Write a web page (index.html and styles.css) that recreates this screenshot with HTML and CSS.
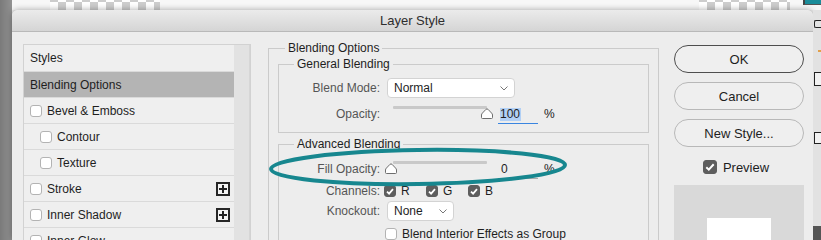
FILE: index.html
```html
<!DOCTYPE html>
<html>
<head>
<meta charset="utf-8">
<title>Layer Style</title>
<link rel="stylesheet" href="styles.css">
</head>
<body>
<div class="desktop">
  <div class="side-left"></div>
  <div class="top-strip">
    <div class="checker checker-a"></div>
    <div class="checker checker-b"></div>
    <div class="teal-tab"></div>
  </div>
  <div class="dialog">
    <div class="titlebar">Layer Style</div>
    <div class="dlg-body">
      <div class="style-panel">
        <ul class="style-list">
          <li class="style-row first">Styles</li>
          <li class="style-row is-selected">Blending Options</li>
          <li class="style-row"><span class="cb"></span>Bevel &amp; Emboss</li>
          <li class="style-row sub"><span class="cb"></span>Contour</li>
          <li class="style-row sub"><span class="cb"></span>Texture</li>
          <li class="style-row"><span class="cb"></span>Stroke<span class="plus"><svg width="10" height="10" viewBox="0 0 10 10"><path d="M5 1v8M1 5h8" stroke="#222" stroke-width="2"/></svg></span></li>
          <li class="style-row"><span class="cb"></span>Inner Shadow<span class="plus"><svg width="10" height="10" viewBox="0 0 10 10"><path d="M5 1v8M1 5h8" stroke="#222" stroke-width="2"/></svg></span></li>
          <li class="style-row"><span class="cb"></span>Inner Glow</li>
        </ul>
        <div class="scroll-track"></div>
      </div>

      <div class="options">
        <fieldset class="group outer">
          <legend class="legend-outer">Blending Options</legend>
          <fieldset class="group inner general">
            <legend class="legend-inner">General Blending</legend>
            <div class="row row-select mt7">
              <span class="lbl">Blend Mode:</span>
              <div class="select select-wide"><span>Normal</span><svg class="chev" width="8" height="5" viewBox="0 0 8 5"><path d="M0.5 0.5L4 4L7.5 0.5" fill="none" stroke="#777" stroke-width="1"/></svg></div>
            </div>
            <div class="row row-slider mt4">
              <span class="lbl">Opacity:</span>
              <div class="slider">
                <div class="track"></div>
                <svg class="thumb" style="left:94px" width="12" height="11" viewBox="0 0 12 11"><path d="M1.5 10.5H10.5Q11.5 10.5 11.5 9.5V7Q11.5 6 10.6 5.1L7 1.3Q6 0.4 5 1.3L1.4 5.1Q0.5 6 0.5 7V9.5Q0.5 10.5 1.5 10.5Z" fill="#fff" stroke="#6e6e6e"/></svg>
              </div>
              <div class="num is-focused"><span class="num-sel">100</span></div>
              <span class="pct">%</span>
            </div>
          </fieldset>

          <fieldset class="group inner advanced">
            <legend class="legend-inner">Advanced Blending</legend>
            <div class="row row-slider mt6">
              <span class="lbl">Fill Opacity:</span>
              <div class="slider">
                <div class="track"></div>
                <svg class="thumb" style="left:-2px" width="12" height="11" viewBox="0 0 12 11"><path d="M1.5 10.5H10.5Q11.5 10.5 11.5 9.5V7Q11.5 6 10.6 5.1L7 1.3Q6 0.4 5 1.3L1.4 5.1Q0.5 6 0.5 7V9.5Q0.5 10.5 1.5 10.5Z" fill="#fff" stroke="#6e6e6e"/></svg>
              </div>
              <div class="num"><span class="num-val">0</span></div>
              <span class="pct">%</span>
            </div>
            <div class="row row-check mt5">
              <span class="lbl">Channels:</span>
              <div class="channels">
                <span class="chan"><span class="cb checked"><svg width="8" height="7" viewBox="0 0 8 7"><path d="M1 3.6L3.1 5.6L7 1.2" fill="none" stroke="#fff" stroke-width="1.8"/></svg></span>R</span>
                <span class="chan"><span class="cb checked"><svg width="8" height="7" viewBox="0 0 8 7"><path d="M1 3.6L3.1 5.6L7 1.2" fill="none" stroke="#fff" stroke-width="1.8"/></svg></span>G</span>
                <span class="chan"><span class="cb checked"><svg width="8" height="7" viewBox="0 0 8 7"><path d="M1 3.6L3.1 5.6L7 1.2" fill="none" stroke="#fff" stroke-width="1.8"/></svg></span>B</span>
              </div>
            </div>
            <div class="row row-select mt3">
              <span class="lbl">Knockout:</span>
              <div class="select select-narrow"><span>None</span><svg class="chev" width="8" height="5" viewBox="0 0 8 5"><path d="M0.5 0.5L4 4L7.5 0.5" fill="none" stroke="#777" stroke-width="1"/></svg></div>
            </div>
            <div class="row row-option mt6">
              <span class="cb"></span><span class="opt-text">Blend Interior Effects as Group</span>
            </div>
          </fieldset>
        </fieldset>
      </div>

      <div class="actions">
        <button class="btn btn-default">OK</button>
        <button class="btn">Cancel</button>
        <button class="btn">New Style...</button>
        <div class="preview-toggle">
          <span class="cb checked big"><svg width="10" height="8" viewBox="0 0 10 8"><path d="M1.3 4.2L3.8 6.6L8.7 1.3" fill="none" stroke="#fff" stroke-width="2"/></svg></span>
          <span>Preview</span>
        </div>
        <div class="preview-box">
          <div class="preview-swatch"></div>
        </div>
      </div>
    </div>
  </div>
  <div class="side-right">
    <div class="mark mark-a"></div>
    <div class="mark mark-dot"></div>
    <div class="mark mark-b"></div>
    <div class="mark mark-c"></div>
    <div class="mark-fill"></div>
  </div>
  <svg class="callout" width="310" height="50" viewBox="0 0 310 50">
    <ellipse cx="153" cy="23" rx="147" ry="17" fill="none" stroke="#17878f" stroke-width="4" transform="rotate(-0.8 153 23)"/>
  </svg>
</div>
</body>
</html>
```

FILE: styles.css
```css
* { box-sizing: border-box; }

html, body {
  margin: 0;
  padding: 0;
  background: #ececec;
}

body {
  font-family: "Liberation Sans", Arial, sans-serif;
  font-size: 12px;
  color: #222;
}

.desktop {
  position: relative;
  width: 821px;
  height: 240px;
  overflow: hidden;
  display: grid;
  grid-template-columns: 12px 801px 8px;
  grid-template-rows: 10px 230px;
}

.side-left {
  grid-column: 1;
  grid-row: 1 / span 2;
  background: linear-gradient(to right, #7a7a7a, #929292);
}

.top-strip {
  grid-column: 2 / span 2;
  grid-row: 1;
  background: #f7f7f7;
  display: flex;
  align-items: stretch;
}

.checker {
  background-color: #ffffff;
  background-image:
    linear-gradient(45deg, #cdcdcd 25%, transparent 25%, transparent 75%, #cdcdcd 75%),
    linear-gradient(45deg, #cdcdcd 25%, transparent 25%, transparent 75%, #cdcdcd 75%);
  background-size: 16px 16px;
  background-position: 0 2px, 8px 10px;
}

.checker-a {
  margin-left: 38px;
  width: 110px;
}

.checker-b {
  margin-left: 539px;
  width: 91px;
}

.teal-tab {
  margin-left: 13px;
  width: 18px;
  height: 5px;
  background: #1b8d9a;
  border-left: 2px solid #444;
  border-bottom: 1px solid #555;
}

.side-right {
  grid-column: 3;
  grid-row: 2;
  background: #e2e2e2;
  display: flex;
  flex-direction: column;
  align-items: flex-end;
}

.mark {
  border: 1px solid #222;
  border-right: none;
  width: 7px;
}

.mark-a { margin-top: 10px; height: 8px; border-radius: 2px 0 0 2px; }
.mark-dot { margin-top: 22px; width: 3px; height: 2px; border: none; background: #e2a04a; }
.mark-b { margin-top: 20px; height: 14px; background: #f2f2f2; }
.mark-c { margin-top: 46px; height: 12px; background: #f2f2f2; }
.mark-fill { margin-top: auto; width: 8px; height: 14px; background: #555; }

.dialog {
  grid-column: 2;
  grid-row: 2;
  background: #ededed;
  border-radius: 6px 6px 0 0;
  box-shadow: 0 0 6px rgba(0, 0, 0, 0.35);
  overflow: hidden;
  display: flex;
  flex-direction: column;
}

.titlebar {
  height: 22px;
  flex: none;
  background: linear-gradient(#ebebeb, #d5d5d5);
  border-bottom: 1px solid #b9b9b9;
  text-align: center;
  font-size: 13px;
  line-height: 21px;
  color: #2e2e2e;
}

.dlg-body {
  display: flex;
  align-items: flex-start;
  padding: 0 9px 0 11px;
}

/* ---------- left style list ---------- */
.style-panel {
  width: 228px;
  margin-top: 12px;
  border: 1px solid #d2d2d2;
  border-bottom: none;
  display: flex;
  background: #efefef;
}

.style-list {
  list-style: none;
  margin: 0;
  padding: 0;
  width: 210px;
}

.style-row {
  height: 26px;
  border-bottom: 1px solid #dadada;
  display: flex;
  align-items: center;
  padding-left: 6px;
  padding-right: 4px;
  color: #1e1e1e;
  white-space: nowrap;
}

.style-row.first { height: 27px; }

.style-row.sub { padding-left: 16px; }

.style-row.is-selected { background: #b4b4b4; }

.style-row .cb { margin-right: 5px; }

.plus {
  margin-left: auto;
  width: 14px;
  height: 14px;
  border: 2px solid #262626;
  display: flex;
  align-items: center;
  justify-content: center;
  background: #f4f4f4;
}

.plus svg { display: block; }

.scroll-track {
  width: 16px;
  align-self: stretch;
  background: #e2e2e2;
  border-right: 1px solid #d6d6d6;
}

/* ---------- checkboxes ---------- */
.cb {
  flex: none;
  width: 12px;
  height: 12px;
  border: 1px solid #b3b3b3;
  border-radius: 3px;
  background: #fff;
  display: inline-flex;
  align-items: center;
  justify-content: center;
}

.cb.checked {
  background: #5e5e5e;
  border-color: #5e5e5e;
}

.cb.big {
  width: 14px;
  height: 14px;
}

.cb svg { display: block; }

/* ---------- fieldsets ---------- */
.options {
  width: 391px;
  margin-left: 17px;
  margin-top: 9px;
}

.group {
  margin: 0;
  min-width: 0;
  border: 1px solid #cbcbcb;
}

.group legend {
  font-size: 12px;
  line-height: 14px;
  padding: 0 3px;
  color: #1e1e1e;
}

.outer {
  padding: 0 9px 0 9px;
  border-bottom: none;
}

.legend-outer { margin-left: 7px; }

.inner {
  padding: 0 0 8px 0;
}

.legend-inner { margin-left: 15px; }

.general { margin-top: 2px; }

.advanced {
  margin-top: 4px;
  border-bottom: none;
  padding-bottom: 20px;
}

.row {
  display: flex;
  align-items: flex-start;
}

.mt3 { margin-top: 3px; }
.mt4 { margin-top: 4px; }
.mt5 { margin-top: 5px; }
.mt6 { margin-top: 6px; }
.mt7 { margin-top: 7px; }

.lbl {
  width: 101px;
  flex: none;
  text-align: right;
  color: #555;
  white-space: nowrap;
}

.row-select { height: 20px; }
.row-select .lbl { line-height: 20px; }

.select {
  margin-left: 7px;
  height: 20px;
  background: #fff;
  border: 1px solid #d3d3d3;
  border-radius: 4px;
  display: flex;
  align-items: center;
  padding: 0 6px 0 6px;
  color: #1e1e1e;
}

.select-wide { width: 128px; }
.select-narrow { width: 67px; }

.chev { margin-left: auto; }

.row-slider { height: 22px; }
.row-slider .lbl { margin-top: 5px; line-height: 14px; }

.slider {
  position: relative;
  margin-left: 7px;
  width: 111px;
  height: 18px;
  flex: none;
}

.track {
  margin-left: 6px;
  margin-top: 4px;
  width: 94px;
  height: 3px;
  background: #c9c9c9;
  border-radius: 1px;
}

.thumb {
  position: absolute;
  top: 6px;
  display: block;
}

.num {
  margin-top: 5px;
  width: 40px;
  height: 17px;
  border-bottom: 1px solid #a9a9a9;
  padding-left: 2px;
  line-height: 14px;
  color: #1e1e1e;
}

.num.is-focused { border-bottom-color: #3a85e0; }

.num-sel {
  display: inline-block;
  background: #b2d0f5;
  padding: 0 1px 0 0;
  line-height: 13px;
  margin-top: 1px;
}

.num-val { padding-left: 1px; }

.pct {
  margin-left: 6px;
  margin-top: 5px;
  line-height: 14px;
}

.row-check { height: 14px; line-height: 14px; }

.channels {
  display: flex;
  margin-left: 4px;
}

.chan {
  width: 42px;
  display: flex;
  align-items: center;
  color: #1e1e1e;
}

.chan .cb { margin-right: 5px; }

.row-option {
  height: 14px;
  align-items: center;
  padding-left: 106px;
}

.opt-text {
  margin-left: 5px;
  color: #1e1e1e;
}

/* ---------- right buttons ---------- */
.actions {
  width: 130px;
  margin-left: 15px;
  margin-top: 13px;
  display: flex;
  flex-direction: column;
  gap: 9px;
}

.btn {
  height: 28px;
  border-radius: 14px;
  border: 1px solid #b8b8b8;
  background: #efefef;
  font-family: "Liberation Sans", Arial, sans-serif;
  font-size: 13px;
  color: #1e1e1e;
  padding: 0;
}

.btn-default { border-color: #4e4e4e; }

.preview-toggle {
  margin-top: 4px;
  height: 14px;
  display: flex;
  align-items: center;
  justify-content: center;
  gap: 6px;
  font-size: 13px;
  color: #1e1e1e;
  padding-right: 6px;
}

.preview-box {
  margin-top: 2px;
  height: 80px;
  background: #d9d9d9;
  display: flex;
  justify-content: center;
  padding-top: 33px;
}

.preview-swatch {
  width: 64px;
  height: 60px;
  background: radial-gradient(circle 24px at 40% 95%, #d0d0d0 0%, #e6e6e6 40%, #ffffff 100%);
}

/* ---------- annotation overlay ---------- */
.callout {
  position: absolute;
  left: 265px;
  top: 144px;
  pointer-events: none;
}
```
